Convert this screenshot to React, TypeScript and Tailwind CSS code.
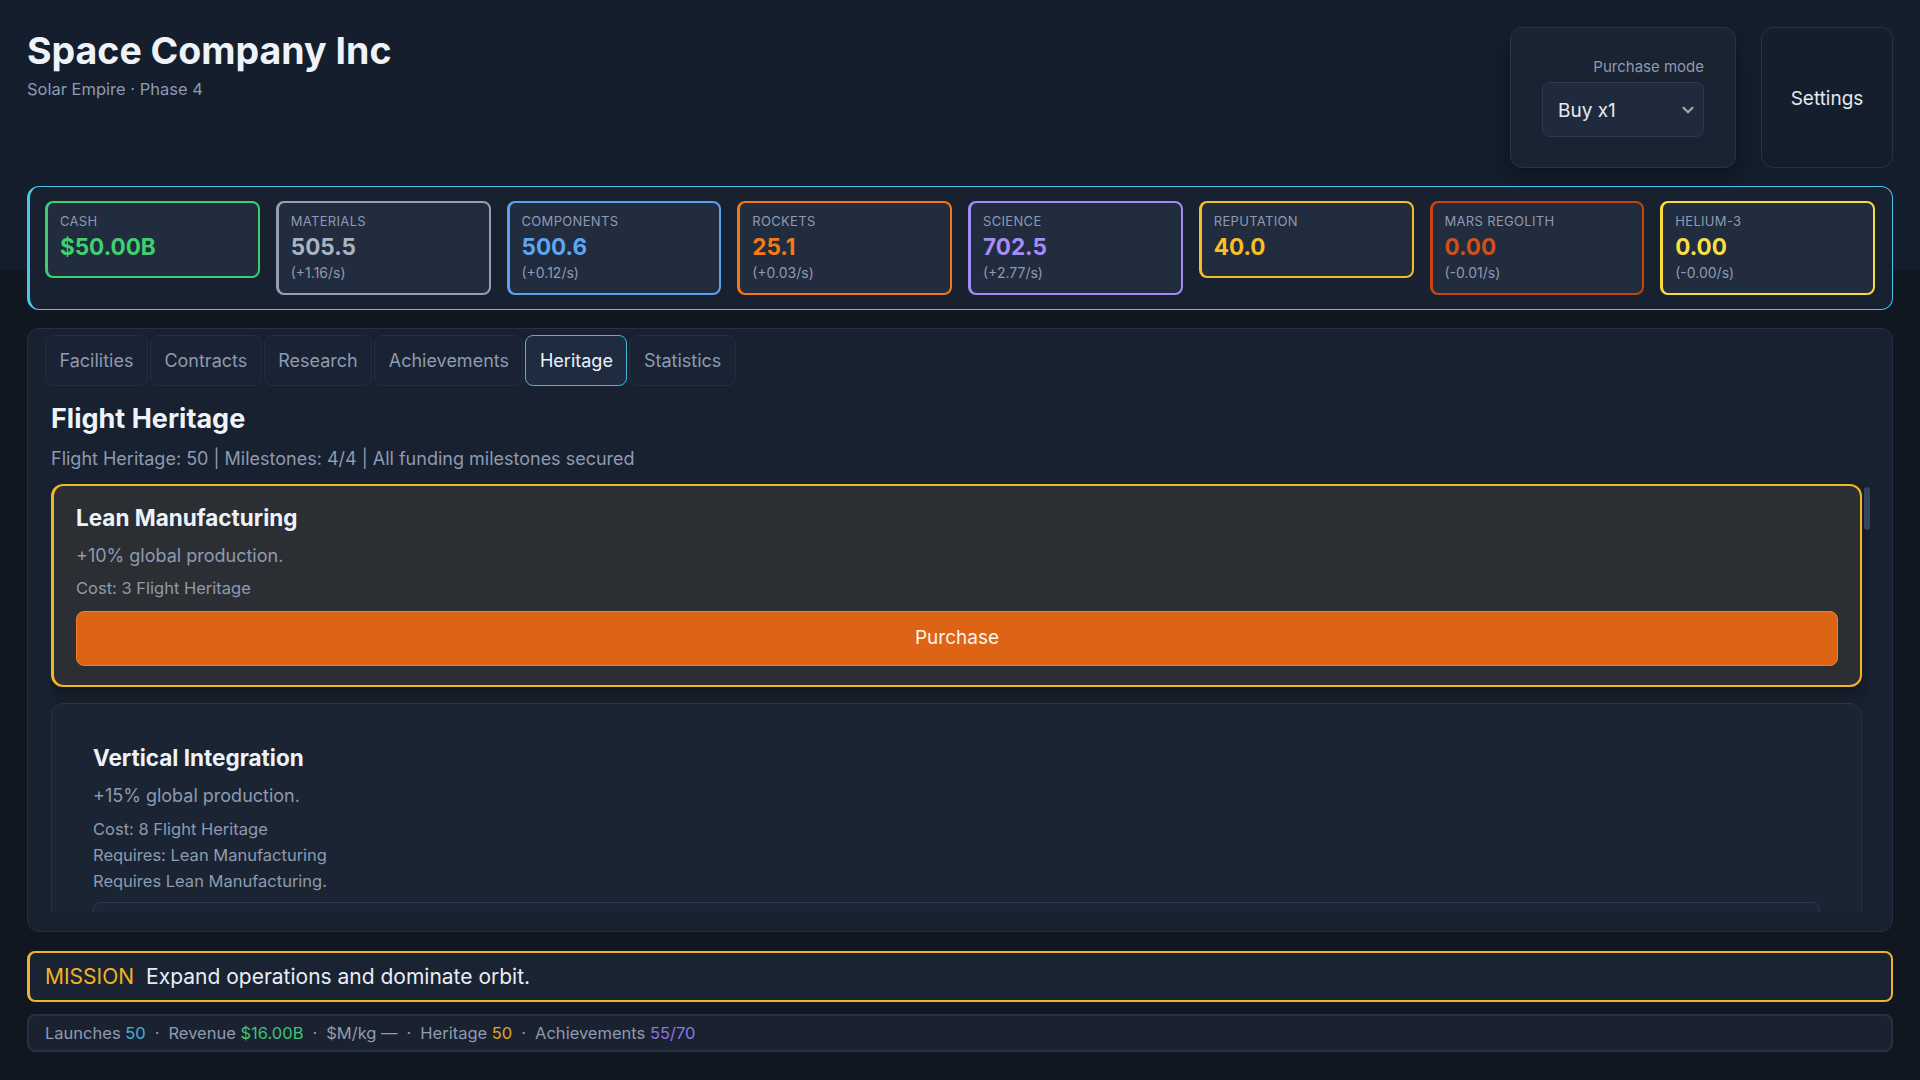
import { ChevronDown } from 'lucide-react'

type Resource = {
  label: string
  value: string
  rate?: string
  border: string
  text: string
}

const resources: Resource[] = [
  { label: 'Cash', value: '$50.00B', border: 'border-[#3ccf6f]', text: 'text-[#3fd070]' },
  { label: 'Materials', value: '505.5', rate: '(+1.16/s)', border: 'border-[#94a0b2]', text: 'text-[#a9b3c2]' },
  { label: 'Components', value: '500.6', rate: '(+0.12/s)', border: 'border-[#5aa2f0]', text: 'text-[#5ea5f2]' },
  { label: 'Rockets', value: '25.1', rate: '(+0.03/s)', border: 'border-[#f57614]', text: 'text-[#f77a18]' },
  { label: 'Science', value: '702.5', rate: '(+2.77/s)', border: 'border-[#a48af5]', text: 'text-[#a68cf6]' },
  { label: 'Reputation', value: '40.0', border: 'border-[#f8bd22]', text: 'text-[#f9bf24]' },
  { label: 'Mars Regolith', value: '0.00', rate: '(-0.01/s)', border: 'border-[#c8430f]', text: 'text-[#d2501a]' },
  { label: 'Helium-3', value: '0.00', rate: '(-0.00/s)', border: 'border-[#f8dc3c]', text: 'text-[#fadf45]' },
]

const tabs = ['Facilities', 'Contracts', 'Research', 'Achievements', 'Heritage', 'Statistics']

function ResourceCard({ r }: { r: Resource }) {
  return (
    <div
      className={`rounded-lg border-2 border-l-[3px] ${r.border} bg-[#212c3f] px-3 pt-2.5 ${r.rate ? 'pb-3' : 'pb-[15px]'}`}
    >
      <div className="text-[13px] leading-4 uppercase tracking-wide text-[#8e9ab0]">{r.label}</div>
      <div className={`mt-1 text-[22.5px] font-bold leading-7 ${r.text}`}>{r.value}</div>
      {r.rate && <div className="mt-1 text-[14px] leading-4 text-[#8e9ab0]">{r.rate}</div>}
    </div>
  )
}

export default function App() {
  return (
    <div className="flex h-screen flex-col overflow-hidden bg-[linear-gradient(180deg,#141e2d_0px,#131d2b_270px,#111721_270px,#111721_100%)] px-[27px] pt-[27px] pb-[28px] font-['Inter','Noto_Sans',sans-serif] text-slate-200">
      {/* header */}
      <div className="flex h-[141px] items-start justify-between">
        <div className="pt-1">
          <h1 className="text-[37.5px] font-bold leading-10 text-[#eef3fa]">Space Company Inc</h1>
          <div className="mt-2 text-[16.5px] leading-5 text-[#8e9ab0]">Solar Empire · Phase 4</div>
        </div>
        <div className="flex gap-[25px]">
          <div className="flex h-[141px] w-[226px] flex-col items-end rounded-xl border border-[#27344a] bg-[#1a2332] px-[31px] pt-[29px] shadow-[0_8px_20px_rgba(0,0,0,0.35)]">
            <div className="text-[15px] leading-5 text-[#8e9ab0]">Purchase mode</div>
            <div className="relative mt-[5px] w-[162px]">
              <select
                defaultValue="1"
                className="h-[55px] w-full appearance-none rounded-lg border border-[#2c3a51] bg-[#1f2a3d] pt-[3px] pl-[15px] text-[19px] text-[#e5eaf1] outline-none"
              >
                <option value="1">Buy x1</option>
                <option value="10">Buy x10</option>
                <option value="max">Buy Max</option>
              </select>
              <ChevronDown
                size={18}
                strokeWidth={3}
                className="pointer-events-none absolute top-[19px] right-[7px] text-[#a3a3a3]"
              />
            </div>
          </div>
          <button
            type="button"
            className="h-[141px] w-[132px] rounded-xl border border-[#253247] pt-1 text-[19px] text-[#e2e8f0]"
          >
            Settings
          </button>
        </div>
      </div>

      {/* resources */}
      <div className="mt-[18px] rounded-xl border border-l-[3px] border-[#4cc3ea] bg-[#182130] pt-[14px] pr-[17px] pb-[14px] pl-[15px]">
        <div className="grid grid-cols-8 items-start gap-4">
          {resources.map((r) => (
            <ResourceCard key={r.label} r={r} />
          ))}
        </div>
      </div>

      {/* main panel */}
      <div className="mt-[18px] flex min-h-0 flex-1 flex-col rounded-xl border border-[#243146] bg-[#18212f] pt-[6px] pb-[19px]">
        <div className="ml-[17px] flex gap-0.5">
          {tabs.map((t) => {
            const active = t === 'Heritage'
            return (
              <button
                key={t}
                type="button"
                className={[
                  'h-[51px] rounded-lg border px-[13.5px] text-[18px]',
                  active
                    ? 'border-[#44b9dc] bg-[#1f2b3f] text-[#eef3fa]'
                    : 'border-[#222d40] bg-[#1a2333] text-[#8e9ab0]',
                ].join(' ')}
              >
                {t}
              </button>
            )
          })}
        </div>

        <div className="flex min-h-0 flex-1 flex-col pr-[22px] pl-[23px]">
          <h2 className="mt-[17px] text-[27px] leading-8 font-bold text-[#eef3fa]">Flight Heritage</h2>
          <div className="mt-[11px] text-lg leading-[26px] text-[#8e9ab0]">
            Flight Heritage: 50 | Milestones: 4/4 | All funding milestones secured
          </div>

          <div className="relative mt-3 min-h-0 flex-1 overflow-hidden pr-2">
            <div className="space-y-4">
              <div className="rounded-xl border-2 border-l-[3px] border-[#f2b623] bg-[#2b2f34] px-[22px] pt-[18px] pb-[19px] shadow-[0_6px_16px_rgba(0,0,0,0.35)]">
                <div className="text-[22.5px] leading-7 font-bold text-[#eef3fa]">Lean Manufacturing</div>
                <div className="mt-2.5 text-lg leading-7 text-[#8e9ab0]">+10% global production.</div>
                <div className="mt-1.5 text-[16.5px] leading-[25px] text-[#8e9ab0]">Cost: 3 Flight Heritage</div>
                <button
                  type="button"
                  className="mt-[10px] h-[55px] w-full rounded-lg border border-[#f47c2c] bg-[#dc6414] text-[19px] text-[#fff4ea]"
                >
                  Purchase
                </button>
              </div>

              <div className="rounded-xl border border-[#263449] bg-[#1a2433] px-[41px] pt-[40px] pb-[20px]">
                <div className="text-[22.5px] leading-7 font-bold text-[#eef3fa]">Vertical Integration</div>
                <div className="mt-2.5 text-lg leading-7 text-[#8e9ab0]">+15% global production.</div>
                <div className="mt-1.5 text-[16.5px] leading-[26px] text-[#8e9ab0]">
                  <div>Cost: 8 Flight Heritage</div>
                  <div>Requires: Lean Manufacturing</div>
                  <div>Requires Lean Manufacturing.</div>
                </div>
                <div className="mt-2 h-[55px] w-full rounded-lg border border-[#2a3850] bg-[#1c2637]" />
              </div>
            </div>
            {/* scrollbar thumb */}
            <div className="absolute top-[3px] right-0 h-[43px] w-[6px] rounded-full bg-[#34445b]" />
          </div>
        </div>
      </div>

      {/* mission */}
      <div className="mt-[19px] flex h-[51px] items-center gap-3 rounded-lg border-2 border-l-[3px] border-[#eeb32b] bg-[#1a2332] px-[15px] text-[21px]">
        <span className="text-[#f2b423]">MISSION</span>
        <span className="text-[#e8edf4]">Expand operations and dominate orbit.</span>
      </div>

      {/* stats */}
      <div className="mt-3 flex h-[38px] items-center rounded-lg border-2 border-[#243146] bg-[#1a2230] px-[16px] text-[16.5px] text-[#8e9ab0]">
        <span>
          Launches <span className="text-[#3fb6d6]">50</span>
        </span>
        <span className="mx-[9px]">·</span>
        <span>
          Revenue <span className="text-[#3ec476]">$16.00B</span>
        </span>
        <span className="mx-[9px]">·</span>
        <span>$M/kg —</span>
        <span className="mx-[9px]">·</span>
        <span>
          Heritage <span className="text-[#e3a621]">50</span>
        </span>
        <span className="mx-[9px]">·</span>
        <span>
          Achievements <span className="text-[#8b76e6]">55/70</span>
        </span>
      </div>
    </div>
  )
}
